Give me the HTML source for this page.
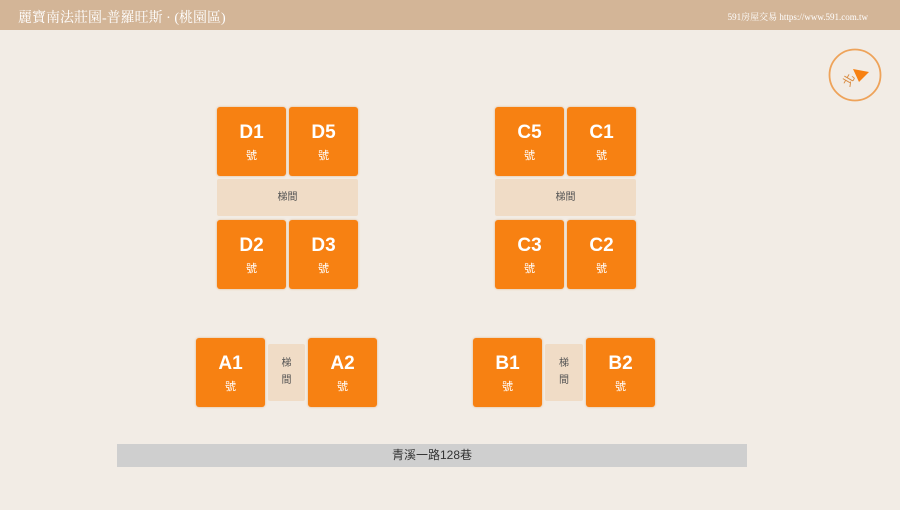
<!DOCTYPE html>
<html><head><meta charset="utf-8"><style>
body{margin:0;width:900px;height:510px;background:#f2ece5;position:relative;overflow:hidden;font-family:"Liberation Sans","Noto Sans CJK TC",sans-serif}
.hd{position:absolute;left:0;top:0;width:900px;height:30px;background:#d3b597;color:#fff}
.t{position:absolute;left:18px;top:7px;font-size:14px;font-family:"Liberation Serif","Noto Serif CJK SC",serif}
.r{position:absolute;right:32px;top:10px;font-size:9px;font-family:"Liberation Serif","Noto Serif CJK SC",serif}
.u{position:absolute;width:69px;height:69px;background:#f78112;border-radius:3px;color:#fff;text-align:center;box-shadow:0 0 2px rgba(200,100,0,.4)}
.u b{display:block;font-size:19px;margin-top:15px;line-height:22px}
.u i{display:block;font-style:normal;font-size:11px;margin-top:3px}
.s{position:absolute;background:#f0dcc6;color:#555;font-size:10px;text-align:center;border-radius:2px}
.road{position:absolute;left:117px;top:444px;width:630px;height:23px;background:#cfcfcf;color:#333;font-size:12px;text-align:center;line-height:22px}
</style></head><body>
<div class="hd"><div class="t">麗寶南法莊園-普羅旺斯 · (桃園區)</div><div class="r">591房屋交易 https://www.591.com.tw</div></div>
<svg style="position:absolute;left:828px;top:48px" width="56" height="56"><circle cx="27" cy="27" r="25.5" fill="none" stroke="#eea35a" stroke-width="1.8"/><polygon points="25,21 41,24 31,34" fill="#f78112"/><text x="13" y="37" font-size="12" fill="#d98b40" transform="rotate(-60 19 31)" font-family="Noto Sans CJK TC">北</text></svg>
<div class="u" style="left:217px;top:107px"><b>D1</b><i>號</i></div>
<div class="u" style="left:289px;top:107px"><b>D5</b><i>號</i></div>
<div class="s" style="left:217px;top:179px;width:141px;height:37px;line-height:37px">梯間</div>
<div class="u" style="left:217px;top:220px"><b>D2</b><i>號</i></div>
<div class="u" style="left:289px;top:220px"><b>D3</b><i>號</i></div>
<div class="u" style="left:495px;top:107px"><b>C5</b><i>號</i></div>
<div class="u" style="left:567px;top:107px"><b>C1</b><i>號</i></div>
<div class="s" style="left:495px;top:179px;width:141px;height:37px;line-height:37px">梯間</div>
<div class="u" style="left:495px;top:220px"><b>C3</b><i>號</i></div>
<div class="u" style="left:567px;top:220px"><b>C2</b><i>號</i></div>
<div class="u" style="left:196px;top:338px"><b>A1</b><i>號</i></div>
<div class="s" style="left:268px;top:344px;width:37px;height:57px;line-height:17px"><div style="margin-top:11px">梯<br>間</div></div>
<div class="u" style="left:308px;top:338px"><b>A2</b><i>號</i></div>
<div class="u" style="left:473px;top:338px"><b>B1</b><i>號</i></div>
<div class="s" style="left:545px;top:344px;width:38px;height:57px;line-height:17px"><div style="margin-top:11px">梯<br>間</div></div>
<div class="u" style="left:586px;top:338px"><b>B2</b><i>號</i></div>
<div class="road">青溪一路128巷</div>
</body></html>
